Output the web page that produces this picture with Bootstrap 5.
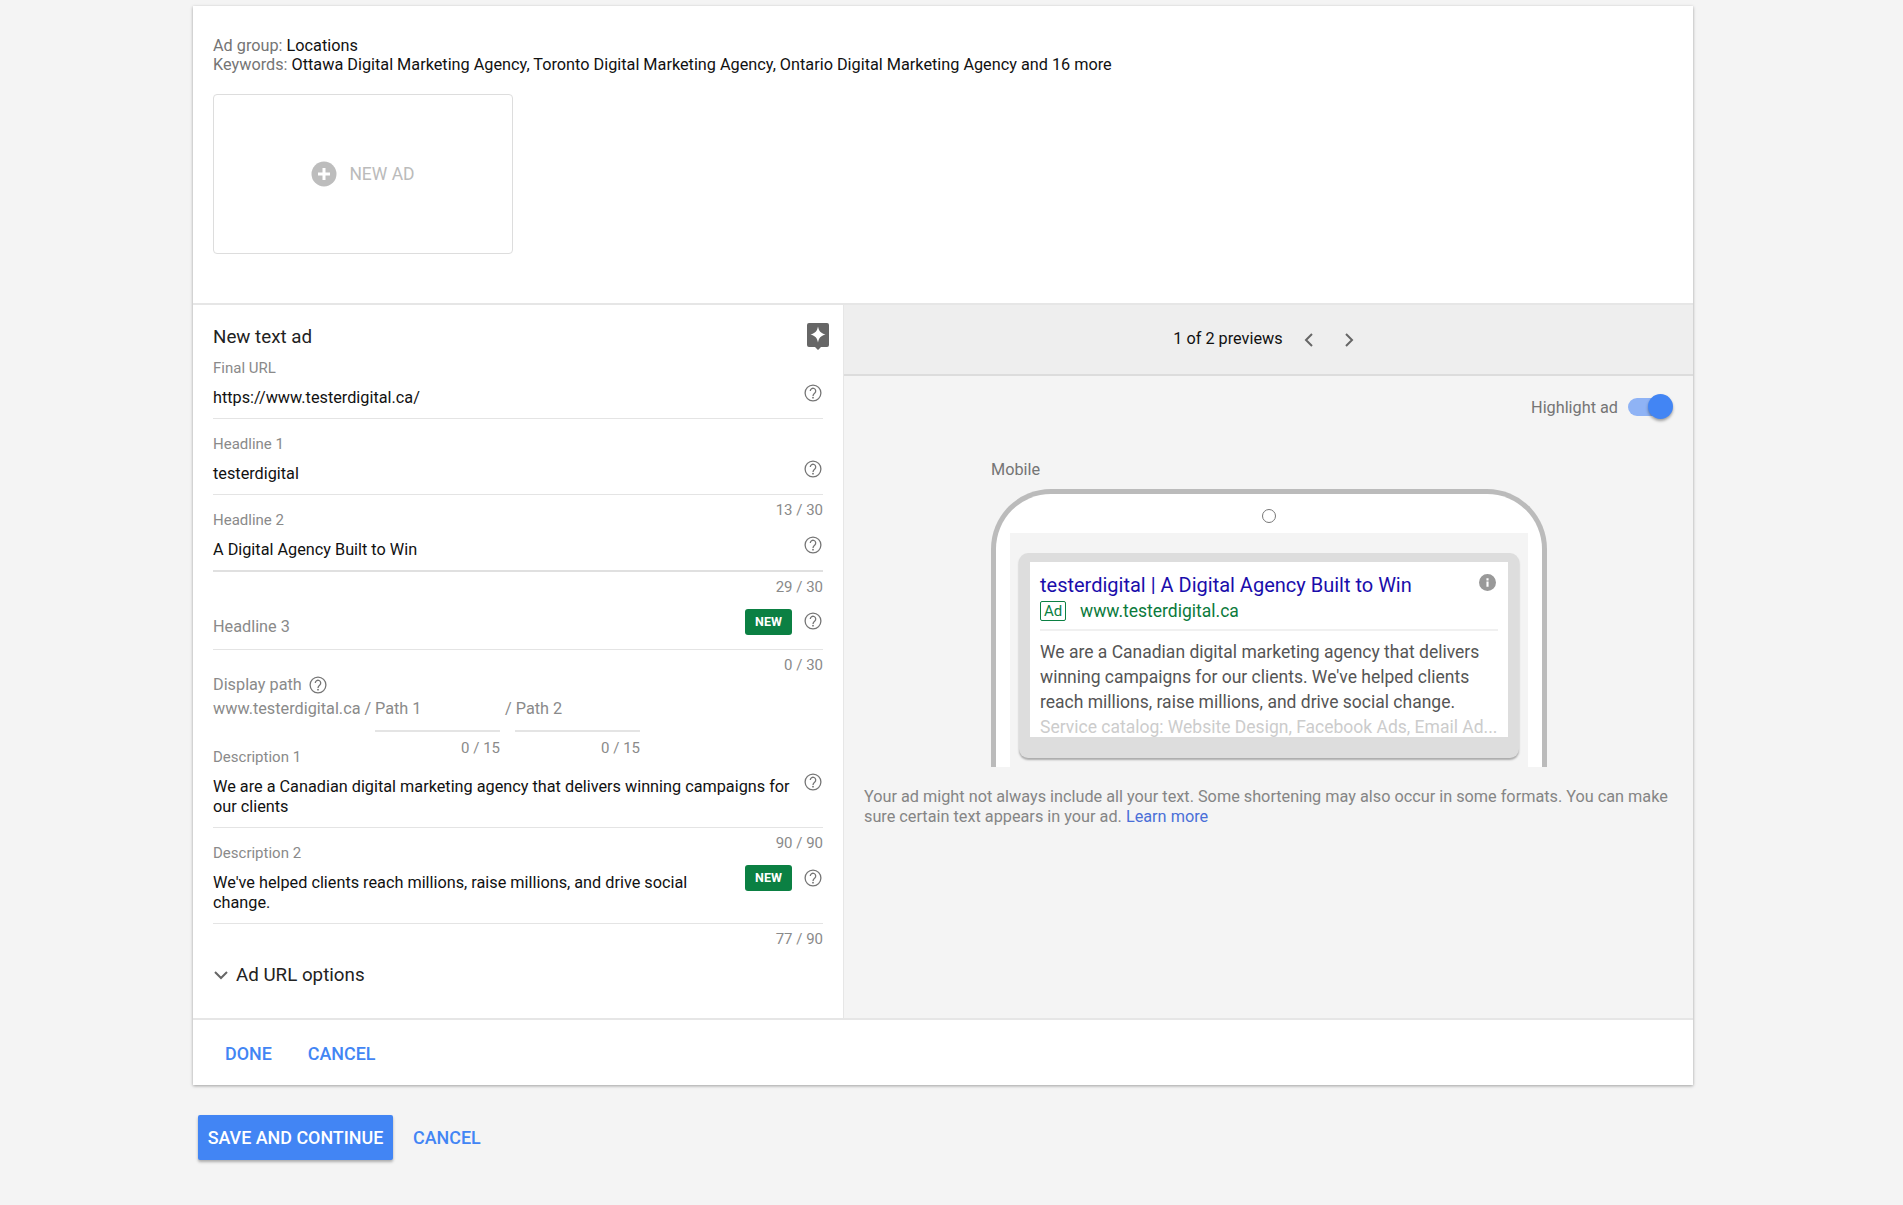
<!DOCTYPE html>
<html lang="en">
<head>
<meta charset="utf-8">
<title>New text ad</title>
<link rel="stylesheet" href="https://cdn.jsdelivr.net/npm/bootstrap@5.3.0/dist/css/bootstrap.min.css">
<style>
body{background:#f4f4f4;font-family:Roboto,"Liberation Sans",sans-serif;font-size:16.25px;line-height:20px;color:#000;height:1205px;overflow:hidden}
.ad-shell{width:1500px;margin:6px 0 0 193px;background:#fff;box-shadow:0 1px 3px rgba(0,0,0,.35)}
.ad-top{height:299px;padding:30px 20px 0;color:#757575;border-bottom:2px solid #e6e6e6}
.ad-meta{line-height:19px;font-size:16.25px}
.ad-meta b{font-weight:400;color:#111}
.new-box{width:300px;height:160px;margin-top:20px;border:1px solid #ddd;border-radius:4px;color:#bbb;font-size:17.5px}
.ad-split{height:713px}
.ad-form{width:651px;flex:none;padding:0 20px;border-right:1px solid #e6e6e6;background:#fff}
.form-head{height:53px;padding-top:22px;font-size:18.75px;color:#222;position:relative}
.spark{position:absolute;right:-6px;top:18px}
.fld-lab{height:20px;font-size:15px;color:#8a8a8a}
.fld-row{display:flex;margin-top:10px;font-size:16.25px;color:#111;min-height:20px}
.fld-row .grow-txt{flex:1;min-width:0}
.fld-line{border-top:1px solid #e4e4e4;margin-top:10px}
.fld-line.thick{border-top:2px solid #e0e0e0}
.fld-count{height:15px;padding-top:5px;text-align:right;font-size:15px;color:#8a8a8a;line-height:20px}
.help-ic{width:20px;height:20px;flex:none;display:block}
.help-at{margin-top:-5px}
.new-tag{width:47px;height:26px;background:#0b8043;color:#fff;border-radius:3px;font-size:12.5px;font-weight:700;line-height:26px;text-align:center;margin:-8px 11px 0 0;flex:none}
.ph-row{margin-top:30px;font-size:16.25px;color:#8a8a8a}
.ph-row .help-at{margin-top:-6px}
.ph-row + .fld-line{margin-top:12px}
.path-lab{margin-top:10px;display:flex;align-items:center;gap:6px}
.path-row{display:flex;font-size:16.25px;color:#8a8a8a;margin-top:4px;line-height:20px}
.path-col{width:125px;flex:none}
.path-col .fld-line{margin-top:11px;border-top-width:2px}
.path-col .fld-count{padding-top:6px}
.url-lab{font-size:16.25px;white-space:nowrap}
.path-base{width:162px;flex:none}
.path-gap{margin-left:15px}
.path-slash{margin-left:-10px;margin-right:4px}
.url-more{height:95px;padding-top:26px;font-size:18.75px;color:#222;display:flex;align-items:flex-start;gap:7px}
.chev-down{margin-top:2px}
.ad-prev{flex:1;min-width:0;background:#f4f4f4}
.prev-bar{height:71px;background:#eee;border-bottom:2px solid #dcdcdc;font-size:16.25px;color:#111;padding:0 9px 2px 0}
.chev-l{margin:2px 0 0 20px}
.chev-r{margin:2px 0 0 28px}
.hl-row{color:#757575;font-size:16.25px;height:84px;padding:22px 22px 0 0}
.sw-track{width:43px;height:18px;border-radius:9px;background:#8fb3f5;position:relative;margin-left:10px}
.sw-knob{position:absolute;right:-2px;top:-4px;width:25px;height:25px;border-radius:50%;background:#4285f4;box-shadow:0 2px 3px rgba(0,0,0,.35)}
.mob-wrap{width:556px;margin-left:147px}
.mob-lab{color:#757575;font-size:16.25px;height:20px}
.mob-phone{height:278px;margin-top:9px;background:#fff;border:5px solid #bbb;border-bottom:0;border-radius:60px 60px 0 0;overflow:hidden;padding:0 14px}
.mob-dot{width:14px;height:14px;border:1px solid #777;border-radius:50%;margin:15px auto 10px}
.mob-screen{height:245px;background:#f4f4f4;padding:20px 9px 0}
.mob-card{height:205px;background:#ddd;border-radius:9px;padding:9px 11px 21px;box-shadow:0 2px 2px rgba(0,0,0,.3)}
.mob-white{height:175px;background:#fff;overflow:hidden;padding:10px 10px 0;position:relative}
.mob-title{color:#1a0dab;font-size:20px;line-height:26px;white-space:nowrap}
.mob-url{color:#0b7a3c;font-size:17.5px;line-height:24px;gap:14px;margin-top:1px}
.ad-tag{width:26px;height:20px;border:1px solid #0b8043;border-radius:2px;font-size:15px;line-height:18px;text-align:center;color:#0b8043;flex:none}
.mob-rule{border-top:2px solid #f0f0f0;margin:6px 0 9px}
.mob-desc{font-size:17.5px;line-height:25px;color:#555;white-space:nowrap}
.mob-fade{color:#ccc}
.info-ic{position:absolute;right:12px;top:12px;width:17px;height:17px;fill:#999}
.prev-note{margin:20px 16px 0 20px;font-size:16.25px;line-height:19.5px;color:#858585}
.prev-note a{color:#4a6fd8;text-decoration:none}
.ad-foot{height:67px;border-top:2px solid #e6e6e6;padding:1px 0 0 20px;gap:12px}
.flat-btn{font-family:inherit;font-size:17.9px;font-weight:500;color:#4285f4;padding:2px 12px 0;border:0;background:none;text-transform:uppercase}
.flat-btn:hover{color:#4285f4}
.page-btns{margin:30px 0 0 198px;gap:8px}
.save-btn{height:45px;width:195px;padding:2px 0 0;background:#4285f4;border:0;border-radius:2px;color:#fff;font-size:17.9px;font-weight:500;box-shadow:0 2px 3px rgba(0,0,0,.3)}
.save-btn:hover{background:#4285f4;color:#fff}
</style>
</head>
<body>
<svg width="0" height="0" class="position-absolute">
<symbol id="help" viewBox="0 0 20 20"><circle cx="10" cy="10" r="7.9" fill="none" stroke="#757575" stroke-width="1.3"/><path d="M7.300 8a2.700 2.700 0 1 1 4.500 2c-1.100.9-1.800 1.500-1.800 3" fill="none" stroke="#757575" stroke-width="1.300"/><circle cx="10" cy="14.700" r=".9" fill="#757575"/></symbol>
</svg>
<main class="ad-shell">
  <section class="ad-top">
    <div class="ad-meta">Ad group: <b>Locations</b><br>Keywords: <b>Ottawa Digital Marketing Agency, Toronto Digital Marketing Agency, Ontario Digital Marketing Agency and 16 more</b></div>
    <div class="new-box d-flex align-items-center justify-content-center gap-2">
      <svg width="26" height="26" viewBox="0 0 26 26"><circle cx="13" cy="13" r="12.5" fill="#bdbdbd"/><path d="M11.500 7h3v4.500H19v3h-4.500V19h-3v-4.500H7v-3h4.500z" fill="#fff"/></svg>
      <span class="ms-1">NEW AD</span>
    </div>
  </section>
  <section class="ad-split d-flex">
    <div class="ad-form">
      <div class="form-head">New text ad
        <svg class="spark" width="22" height="27" viewBox="0 0 22 27"><path d="M2 0h18a2 2 0 0 1 2 2v20a2 2 0 0 1-2 2h-6l-3 3-3-3H2a2 2 0 0 1-2-2V2a2 2 0 0 1 2-2z" fill="#666"/><path d="M11 3.500c.9 4.400 2.600 6.800 7.500 8-4.900 1.200-6.600 3.600-7.500 8-.9-4.400-2.600-6.800-7.500-8 4.900-1.200 6.600-3.600 7.500-8z" fill="#fff"/></svg>
      </div>
      <div class="fld-lab">Final URL</div>
      <div class="fld-row"><div class="grow-txt">https://www.testerdigital.ca/</div><svg class="help-ic help-at"><use href="#help"/></svg></div>
      <div class="fld-line"></div>
      <div class="fld-count"></div>

      <div class="fld-lab">Headline 1</div>
      <div class="fld-row"><div class="grow-txt">testerdigital</div><svg class="help-ic help-at"><use href="#help"/></svg></div>
      <div class="fld-line"></div>
      <div class="fld-count">13 / 30</div>

      <div class="fld-lab">Headline 2</div>
      <div class="fld-row"><div class="grow-txt">A Digital Agency Built to Win</div><svg class="help-ic help-at"><use href="#help"/></svg></div>
      <div class="fld-line thick"></div>
      <div class="fld-count">29 / 30</div>

      <div class="fld-row ph-row"><div class="grow-txt">Headline 3</div><div class="new-tag">NEW</div><svg class="help-ic help-at"><use href="#help"/></svg></div>
      <div class="fld-line"></div>
      <div class="fld-count">0 / 30</div>

      <div class="fld-lab path-lab"><span class="url-lab">Display path</span><svg class="help-ic"><use href="#help"/></svg></div>
      <div class="path-row">
        <div class="url-lab path-base">www.testerdigital.ca /</div>
        <div class="path-col"><div>Path 1</div><div class="fld-line"></div><div class="fld-count">0 / 15</div></div>
        <div class="path-col path-gap"><div><span class="path-slash">/</span>Path 2</div><div class="fld-line"></div><div class="fld-count">0 / 15</div></div>
      </div>

      <div class="fld-lab">Description 1</div>
      <div class="fld-row"><div class="grow-txt pe-2">We are a Canadian digital marketing agency that delivers winning campaigns for our clients</div><svg class="help-ic help-at"><use href="#help"/></svg></div>
      <div class="fld-line"></div>
      <div class="fld-count">90 / 90</div>

      <div class="fld-lab">Description 2</div>
      <div class="fld-row"><div class="grow-txt pe-5">We've helped clients reach millions, raise millions, and drive social change.</div><div class="new-tag">NEW</div><svg class="help-ic help-at"><use href="#help"/></svg></div>
      <div class="fld-line"></div>
      <div class="fld-count">77 / 90</div>

      <div class="url-more">
        <svg class="chev-down" width="16" height="16" viewBox="0 0 16 16"><path d="M2 5l6 6 6-6" fill="none" stroke="#666" stroke-width="2"/></svg>
        <span>Ad URL options</span>
      </div>
    </div>
    <div class="ad-prev">
      <div class="prev-bar d-flex align-items-center justify-content-center">
        <span>1 of 2 previews</span>
        <svg class="chev-l" width="12" height="16" viewBox="0 0 12 16"><path d="M9 2L3 8l6 6" fill="none" stroke="#666" stroke-width="2"/></svg>
        <svg class="chev-r" width="12" height="16" viewBox="0 0 12 16"><path d="M3 2l6 6-6 6" fill="none" stroke="#666" stroke-width="2"/></svg>
      </div>
      <div class="hl-row d-flex justify-content-end align-items-start">
        <span>Highlight ad</span>
        <div class="sw-track"><div class="sw-knob"></div></div>
      </div>
      <div class="mob-wrap">
        <div class="mob-lab">Mobile</div>
        <div class="mob-phone">
          <div class="mob-dot"></div>
          <div class="mob-screen">
            <div class="mob-card">
              <div class="mob-white">
                <div class="mob-title">testerdigital | A Digital Agency Built to Win</div>
                <svg class="info-ic" viewBox="0 0 16 16"><path d="M8 0a8 8 0 1 0 0 16A8 8 0 0 0 8 0zm1 12H7V7h2v5zm0-6H7V4h2v2z"/></svg>
                <div class="mob-url d-flex align-items-center"><span class="ad-tag">Ad</span><span>www.testerdigital.ca</span></div>
                <div class="mob-rule"></div>
                <div class="mob-desc">We are a Canadian digital marketing agency that delivers<br>winning campaigns for our clients. We've helped clients<br>reach millions, raise millions, and drive social change.<br><span class="mob-fade">Service catalog: Website Design, Facebook Ads, Email Ad...</span></div>
              </div>
            </div>
          </div>
        </div>
      </div>
      <p class="prev-note">Your ad might not always include all your text. Some shortening may also occur in some formats. You can make sure certain text appears in your ad. <a href="#">Learn more</a></p>
    </div>
  </section>
  <footer class="ad-foot d-flex align-items-center">
    <button type="button" class="btn flat-btn">Done</button>
    <button type="button" class="btn flat-btn">Cancel</button>
  </footer>
</main>
<div class="page-btns d-flex align-items-center">
  <button type="button" class="btn save-btn">SAVE AND CONTINUE</button>
  <button type="button" class="btn flat-btn">Cancel</button>
</div>
<script src="https://cdn.jsdelivr.net/npm/bootstrap@5.3.0/dist/js/bootstrap.bundle.min.js"></script>
</body>
</html>
